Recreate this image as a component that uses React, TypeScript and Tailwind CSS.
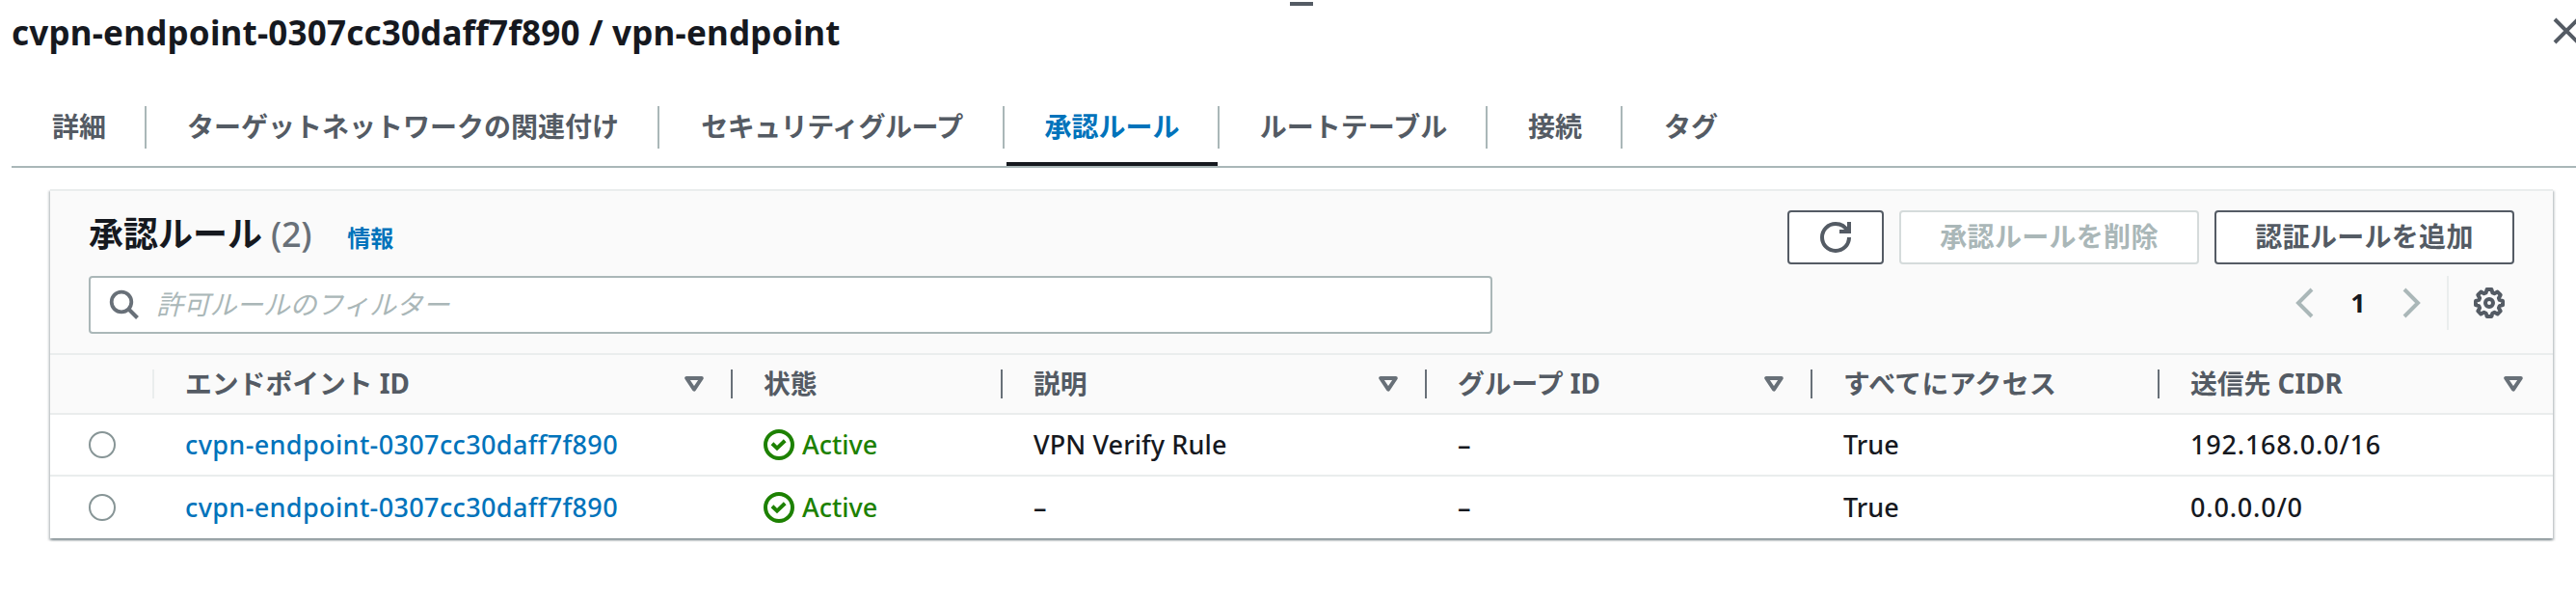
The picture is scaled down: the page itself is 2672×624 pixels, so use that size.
import type { ReactNode } from "react";

type Tab = {
  label: string;
  className: string;
  active?: boolean;
};

type Rule = {
  endpointId: string;
  description: string;
  groupId: string;
  accessAll: string;
  cidr: string;
};

const tabs: Tab[] = [
  { label: "詳細", className: "w-[140px]" },
  { label: "ターゲットネットワークの関連付け", className: "w-[532px]" },
  { label: "セキュリティグループ", className: "w-[358px] tracking-[-0.5px]" },
  { label: "承認ルール", className: "w-[223px]", active: true },
  { label: "ルートテーブル", className: "w-[278px]" },
  { label: "接続", className: "w-[140px]" },
  { label: "タグ", className: "w-[140px]" },
];

const rules: Rule[] = [
  {
    endpointId: "cvpn-endpoint-0307cc30daff7f890",
    description: "VPN Verify Rule",
    groupId: "–",
    accessAll: "True",
    cidr: "192.168.0.0/16",
  },
  {
    endpointId: "cvpn-endpoint-0307cc30daff7f890",
    description: "–",
    groupId: "–",
    accessAll: "True",
    cidr: "0.0.0.0/0",
  },
];

const columns =
  "grid grid-cols-[108px_600px_280px_440px_400px_360px_1fr] items-center";

function CloseIcon() {
  return (
    <svg width="28" height="28" viewBox="0 0 28 28" className="shrink-0">
      <path
        d="M2 2l24 24M26 2L2 26"
        fill="none"
        stroke="#545b64"
        strokeWidth="4"
      />
    </svg>
  );
}

function RefreshIcon() {
  return (
    <svg width="32" height="32" viewBox="0 0 16 16">
      <path
        d="M15 8c0 3.9-3.1 7-7 7s-7-3.1-7-7 3.1-7 7-7c2.8 0 5.2 1.6 6.3 4"
        fill="none"
        stroke="#545b64"
        strokeWidth="2"
      />
      <path
        d="M10 5h5V0"
        fill="none"
        stroke="#545b64"
        strokeWidth="2"
      />
    </svg>
  );
}

function SearchIcon() {
  return (
    <svg width="32" height="32" viewBox="0 0 32 32" className="shrink-0">
      <circle
        cx="13"
        cy="13"
        r="10.3"
        fill="none"
        stroke="#687078"
        strokeWidth="3.8"
      />
      <path d="M20 20l9.5 9.5" fill="none" stroke="#687078" strokeWidth="4" />
    </svg>
  );
}

function ChevronIcon({ direction }: { direction: "left" | "right" }) {
  return (
    <svg width="20" height="32" viewBox="0 0 20 32">
      <path
        d={direction === "left" ? "M18 2L4 16l14 14" : "M2 2l14 14L2 30"}
        fill="none"
        stroke="#aab7b8"
        strokeWidth="4"
      />
    </svg>
  );
}

function GearIcon() {
  return (
    <svg width="32" height="32" viewBox="0 0 32 32">
      <path
        d="M13.6 2h4.8l1 3.4 2 .9 3.2-1.7 3.1 3.1-1.8 3.2.8 2 3.3 1v4.3l-3.3 1-.8 2 1.8 3.2-3.1 3.1-3.2-1.7-2 .9-1 3.3h-4.8l-1-3.3-2-.9-3.2 1.7-3.1-3.1 1.8-3.2-.8-2-3.3-1v-4.3l3.3-1 .8-2-1.8-3.2 3.1-3.1 3.2 1.7 2-.9z"
        fill="none"
        stroke="#545b64"
        strokeWidth="4"
        strokeLinejoin="round"
      />
      <circle
        cx="16"
        cy="16"
        r="4"
        fill="none"
        stroke="#545b64"
        strokeWidth="4"
      />
    </svg>
  );
}

function SortIcon() {
  return (
    <svg width="20" height="16" viewBox="0 0 20 16">
      <path
        d="M2.2 2h15.6L10 13.6z"
        fill="none"
        stroke="#687078"
        strokeWidth="4"
        strokeLinejoin="round"
      />
    </svg>
  );
}

function StatusIcon() {
  return (
    <svg width="32" height="32" viewBox="0 0 32 32">
      <circle
        cx="16"
        cy="16"
        r="14"
        fill="none"
        stroke="#1d8102"
        strokeWidth="4"
      />
      <path
        d="M9 14.8l5 4.8 8.2-7.8"
        fill="none"
        stroke="#1d8102"
        strokeWidth="4"
      />
    </svg>
  );
}

type HeaderCellProps = {
  children: ReactNode;
  sortable?: boolean;
  last?: boolean;
};

function HeaderCell({ children, sortable, last }: HeaderCellProps) {
  return (
    <div
      className={`flex h-[30px] items-center justify-between pl-8 ${
        last ? "pr-[31px]" : "border-r-2 border-[#687078] pr-7"
      }`}
    >
      <span className="-mt-[3px]">{children}</span>
      {sortable && <SortIcon />}
    </div>
  );
}

export default function App() {
  return (
    <div className="h-[624px] w-[2672px] overflow-hidden bg-white font-['Noto_Sans','Noto_Sans_CJK_JP',sans-serif] text-[27px] leading-10 text-[#16191f]">
      <div className="flex h-[6px] justify-center pt-[2px] pl-7">
        <div className="h-1 w-6 bg-[#545b64]" />
      </div>

      <div className="flex h-[94px] items-start justify-between pl-3">
        <h1 className="mt-[8px] text-[35px] font-bold tracking-[0.2px] whitespace-nowrap">
          cvpn-endpoint-0307cc30daff7f890 / vpn-endpoint
        </h1>
        <div className="mt-3 -mr-1">
          <CloseIcon />
        </div>
      </div>

      <nav className="ml-3 flex h-[74px] border-b-2 border-[#aab7b8] text-[28px] font-bold text-[#545b64]">
        {tabs.map((tab, index) => (
          <div key={tab.label} className={`relative shrink-0 ${tab.className}`}>
            <div
              className={`mt-[10px] flex h-11 items-center justify-center pb-[2px] pl-[2px] whitespace-nowrap ${
                index < tabs.length - 1 ? "border-r-2 border-[#aab7b8]" : ""
              } ${tab.active ? "text-[#0073bb]" : ""}`}
            >
              {tab.label}
            </div>
            {tab.active && (
              <div className="absolute bottom-0 left-[2px] h-1 w-[219px] bg-[#16191f]" />
            )}
          </div>
        ))}
      </nav>

      <section className="mt-[22px] mr-6 ml-[52px] h-[362px] border-t-2 border-[#eaeded] bg-white shadow-[0_2px_2px_0_rgba(0,28,36,0.3),2px_2px_2px_0_rgba(0,28,36,0.15),-2px_2px_2px_0_rgba(0,28,36,0.15)]">
        <div className="h-[170px] border-b-2 border-[#eaeded] bg-[#fafafa] px-10 pt-5">
          <div className="flex h-14 justify-between">
            <div className="flex items-baseline pt-[5px] whitespace-nowrap">
              <h2 className="text-[36px] font-bold">承認ルール</h2>
              <span className="ml-[9px] text-[36px] font-medium tracking-[-0.3px] text-[#687078]">
                (2)
              </span>
              <a className="ml-[37px] text-[24px] font-bold text-[#0073bb]">
                情報
              </a>
            </div>
            <div className="flex gap-4 text-[28px] font-bold tracking-[0.3px] whitespace-nowrap">
              <button className="flex h-14 w-[100px] items-center justify-center rounded-[4px] border-2 border-[#545b64] bg-white">
                <RefreshIcon />
              </button>
              <button className="h-14 w-[311px] rounded-[4px] border-2 border-[#d5dbdb] bg-white pb-[2px] text-[#aab7b8]">
                承認ルールを削除
              </button>
              <button className="h-14 w-[311px] rounded-[4px] border-2 border-[#545b64] bg-white pb-[2px] text-[#545b64]">
                認証ルールを追加
              </button>
            </div>
          </div>

          <div className="mt-3 flex justify-between">
            <div className="flex h-[60px] w-[1456px] items-center rounded-[4px] border-2 border-[#aab7b8] bg-white pl-[19px]">
              <SearchIcon />
              <span className="-mt-[2px] ml-[17px] text-[28px] tracking-[-0.3px] text-[#aab7b8] italic">
                許可ルールのフィルター
              </span>
            </div>
            <div className="flex h-14 items-center pr-[10px]">
              <ChevronIcon direction="left" />
              <span className="w-[92px] text-center font-bold">1</span>
              <ChevronIcon direction="right" />
              <div className="ml-[26px] h-14 w-[2px] bg-[#eaeded]" />
              <div className="ml-[26px]">
                <GearIcon />
              </div>
            </div>
          </div>
        </div>

        <div
          className={`${columns} h-[62px] border-b-2 border-[#eaeded] bg-[#fafafa] text-[27.8px] font-bold whitespace-nowrap text-[#545b64]`}
        >
          <div className="h-[30px] border-r-2 border-[#eaeded]" />
          <HeaderCell sortable>エンドポイント ID</HeaderCell>
          <HeaderCell>状態</HeaderCell>
          <HeaderCell sortable>説明</HeaderCell>
          <HeaderCell sortable>グループ ID</HeaderCell>
          <HeaderCell>
            <span className="tracking-[0.4px]">すべてにアクセス</span>
          </HeaderCell>
          <HeaderCell sortable last>
            送信先 CIDR
          </HeaderCell>
        </div>

        {rules.map((rule) => (
          <div
            key={rule.cidr}
            className={`${columns} h-16 border-b-2 border-[#eaeded] whitespace-nowrap last:border-b-0`}
          >
            <div className="pl-10">
              <div className="h-7 w-7 rounded-full border-2 border-[#879596] bg-white" />
            </div>
            <a className="pl-8 font-medium tracking-[0.37px] text-[#0073bb]">
              {rule.endpointId}
            </a>
            <div className="flex items-center gap-2 pl-8 text-[#1d8102]">
              <StatusIcon />
              <span className="font-medium">Active</span>
            </div>
            <div className="pl-8 font-medium tracking-[0.1px]">
              {rule.description}
            </div>
            <div className="pl-8 font-medium">{rule.groupId}</div>
            <div className="pl-8 font-medium">{rule.accessAll}</div>
            <div className="pl-8 font-medium tracking-[0.8px]">{rule.cidr}</div>
          </div>
        ))}
      </section>
    </div>
  );
}
